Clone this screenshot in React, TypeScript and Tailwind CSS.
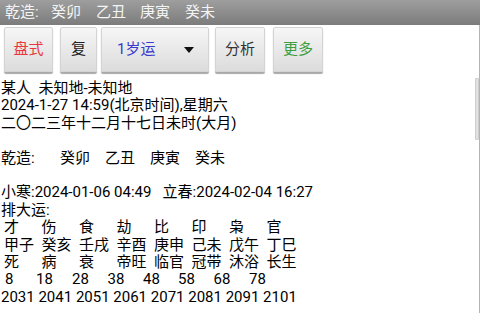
const FONT = "font-['Roboto','Noto_Sans_CJK_SC',sans-serif]";

const gods = ["才", "伤", "食", "劫", "比", "印", "枭", "官"];
const pillars = ["甲子", "癸亥", "壬戌", "辛酉", "庚申", "己未", "戊午", "丁巳"];
const stages = ["死", "病", "衰", "帝旺", "临官", "冠带", "沐浴", "长生"];
const ages = ["8", "18", "28", "38", "48", "58", "68", "78"];
const ageWidths = [31, 36, 35.5, 35.5, 35, 35.5, 35.5, 35.5];

function Btn({ label, color, w }: { label: string; color: string; w: string }) {
  return (
    <div
      className={`${w} h-[45px] flex items-center justify-center rounded-[2px] border border-[#d4d4d4] bg-gradient-to-b from-[#f6f6f6] to-[#dcdcdc] shadow-[0_2px_1px_#a8a8a8] text-[15px] ${color}`}
    >
      {label}
    </div>
  );
}

function Row({ cells }: { cells: string[] }) {
  return (
    <div className="flex pl-[3px]">
      {cells.map((c, i) => (
        <span key={i} className="w-[37.5px] shrink-0 whitespace-nowrap">
          {c}
        </span>
      ))}
    </div>
  );
}

export default function App() {
  return (
    <div className={`relative w-[480px] h-[313px] overflow-hidden bg-white text-black ${FONT}`}>
      <div className="h-[25px] flex items-center pl-[5px] bg-gradient-to-b from-[#9e9e9e] to-[#7c7c7c] text-[15px] text-[#f4f4f4]">
        <span className="w-[46px]">乾造:</span>
        <span className="w-[45px]">癸卯</span>
        <span className="w-[44px]">乙丑</span>
        <span className="w-[45px]">庚寅</span>
        <span>癸未</span>
      </div>

      <div className="flex items-start pt-[2px] pl-[4px] h-[55px]">
        <Btn label="盘式" color="text-[#e8383d]" w="w-[49px]" />
        <div className="ml-[7px]">
          <Btn label="复" color="text-[#222]" w="w-[37px]" />
        </div>
        <div className="ml-[4px] w-[108px] h-[45px] flex items-center pl-[15px] rounded-[2px] border border-[#d4d4d4] bg-gradient-to-b from-[#f6f6f6] to-[#dcdcdc] shadow-[0_2px_1px_#a8a8a8]">
          <span className="text-[15px] text-[#3a3acf]">1岁运</span>
          <svg className="ml-[29px]" width="10" height="6" viewBox="0 0 10 6">
            <path d="M0 0H10L5 6Z" fill="#111" />
          </svg>
        </div>
        <div className="ml-[6px]">
          <Btn label="分析" color="text-[#333]" w="w-[50px]" />
        </div>
        <div className="ml-[8px]">
          <Btn label="更多" color="text-[#3f9f3f]" w="w-[50px]" />
        </div>
      </div>

      <div className="text-[15px] leading-[17.4px] pl-[1px] whitespace-pre">
        <div>{"某人  未知地-未知地"}</div>
        <div>2024-1-27 14:59(北京时间),星期六</div>
        <div>二〇二三年十二月十七日未时(大月)</div>
        <div>&nbsp;</div>
        <div className="flex">
          <span className="w-[59px]">乾造:</span>
          <span className="w-[45px]">癸卯</span>
          <span className="w-[45px]">乙丑</span>
          <span className="w-[45px]">庚寅</span>
          <span>癸未</span>
        </div>
        <div>&nbsp;</div>
        <div>{"小寒:2024-01-06 04:49   立春:2024-02-04 16:27"}</div>
        <div>排大运:</div>
        <Row cells={gods} />
        <Row cells={pillars} />
        <Row cells={stages} />
        <div className="flex pl-[4px]">
          {ages.map((a, i) => (
            <span key={i} className="shrink-0" style={{ width: ageWidths[i] }}>
              {a}
            </span>
          ))}
        </div>
        <div>2031 2041 2051 2061 2071 2081 2091 2101</div>
      </div>

      <div className="absolute right-[1px] top-[78px] w-[4px] h-[62px] rounded-[1px] bg-[#e2e2e2] border border-[#cdcdcd]" />
      <div className="absolute right-0 top-[25px] bottom-0 w-px bg-[#b4b4b4]" />
    </div>
  );
}
